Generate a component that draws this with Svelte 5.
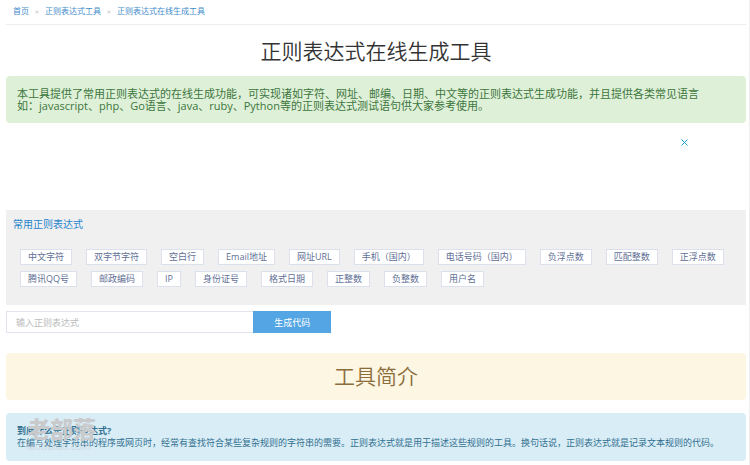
<script>
	let crumbs = ['首页', '正则表达式工具', '正则表达式在线生成工具'];

	let patrones = [
		{ name: '中文字符', value: '[\\u4e00-\\u9fa5]' },
		{ name: '双字节字符', value: '[^\\x00-\\xff]' },
		{ name: '空白行', value: '\\n\\s*\\r' },
		{ name: 'Email地址', value: '\\w+@\\w+(\\.\\w+)+' },
		{ name: '网址URL', value: 'https?://[^\\s]*' },
		{ name: '手机（国内）', value: '1\\d{10}' },
		{ name: '电话号码（国内）', value: '\\d{3,4}-\\d{7,8}' },
		{ name: '负浮点数', value: '-\\d+\\.\\d+' },
		{ name: '匹配整数', value: '-?\\d+' },
		{ name: '正浮点数', value: '\\d+\\.\\d+' },
		{ name: '腾讯QQ号', value: '[1-9]\\d{4,}' },
		{ name: '邮政编码', value: '[1-9]\\d{5}' },
		{ name: 'IP', value: '\\d+\\.\\d+\\.\\d+\\.\\d+' },
		{ name: '身份证号', value: '\\d{17}[\\dXx]' },
		{ name: '格式日期', value: '\\d{4}-\\d{2}-\\d{2}' },
		{ name: '正整数', value: '[1-9]\\d*' },
		{ name: '负整数', value: '-[1-9]\\d*' },
		{ name: '用户名', value: '[A-Za-z0-9_-]+' }
	];

	let regex = '';
	let show_ad = true;
</script>

<div class="page">
	<nav class="crumbs">
		{#each crumbs as crumb, i (crumb)}
			{#if i > 0}<span>»</span>{/if}
			<a href="#top">{crumb}</a>
		{/each}
	</nav>

	<h1>正则表达式在线生成工具</h1>

	<div class="alert success">
		本工具提供了常用正则表达式的在线生成功能，可实现诸如字符、网址、邮编、日期、中文等的正则表达式生成功能，并且提供各类常见语言<br
		/>如：javascript、php、Go语言、java、ruby、Python等的正则表达式测试语句供大家参考使用。
	</div>

	<div class="ad">
		{#if show_ad}
			<button aria-label="关闭" on:click={() => (show_ad = false)}>
				<svg width="8" height="7" viewBox="0 0 8 7">
					<path d="M0.5 0.5L6.5 6.5M6.5 0.5L0.5 6.5" stroke="#1ba3dc" stroke-width="1" />
				</svg>
			</button>
		{/if}
	</div>

	<section class="common">
		<h2>常用正则表达式</h2>
		<div class="chips">
			{#each patrones as p (p.name)}
				<button on:click={() => (regex = p.value)}>{p.name}</button>
			{/each}
		</div>
	</section>

	<form on:submit|preventDefault>
		<input type="text" aria-label="正则表达式" placeholder="输入正则表达式" bind:value={regex} />
		<button>生成代码</button>
	</form>

	<h2 class="alert warning">工具简介</h2>

	<div class="alert info">
		<strong>到底什么是正则表达式?</strong>
		<p>
			在编写处理字符串的程序或网页时，经常有查找符合某些复杂规则的字符串的需要。正则表达式就是用于描述这些规则的工具。换句话说，正则表达式就是记录文本规则的代码。
		</p>
		<div class="watermark">
			<b>老部落</b>
			<small>laobuluo.com</small>
		</div>
	</div>
</div>

<style>
	:global(body) {
		background: #fff;
	}
	.page,
	button,
	input {
		font-family: 'Open Sans', 'Noto Sans CJK SC', sans-serif;
	}
	.page {
		box-sizing: border-box;
		min-height: 100vh;
		padding: 0 3px 3px 6px;
		border-right: 1px solid #eee;
		color: #333;
	}
	h1,
	h2,
	p {
		margin: 0;
		font-weight: 400;
	}
	button {
		cursor: pointer;
	}

	.crumbs {
		display: flex;
		align-items: center;
		height: 22px;
		padding: 0 0 2px 7px;
		border-bottom: 1px solid #eee;
		font-size: 8px;
		line-height: 12px;
	}
	.crumbs a {
		color: #428bca;
		text-decoration: none;
	}
	.crumbs span {
		width: 16px;
		text-align: center;
		color: #bbb;
	}

	h1 {
		margin: 11px 0 10px;
		font-size: 21px;
		font-weight: 350;
		line-height: 30px;
		text-align: center;
	}

	.alert {
		border-radius: 4px;
		padding: 12px 11px;
	}
	.success {
		padding-bottom: 11px;
		background: #dff0d8;
		color: #3c763d;
		font-size: 11px;
		line-height: 12px;
	}

	.ad {
		display: flex;
		justify-content: flex-end;
		align-items: flex-start;
		height: 71px;
		padding: 16px 57px 0 0;
	}
	.ad button {
		display: flex;
		padding: 0;
		border: 0;
		background: none;
	}

	.common {
		padding: 6px 7px 18px;
		background: #f0f0f0;
	}
	.common h2 {
		color: #1f84cc;
		font-size: 10px;
		line-height: 16px;
	}
	.chips {
		display: flex;
		flex-wrap: wrap;
		gap: 6px 14px;
		margin-top: 17px;
		padding-left: 7px;
	}
	.chips button {
		box-sizing: border-box;
		height: 16px;
		padding: 0 7px;
		border: 1px solid #dcdfec;
		background: #fff;
		color: #5f6f95;
		font-size: 9px;
		line-height: 14px;
	}

	form {
		display: flex;
		height: 22px;
		margin: 6px 0 20px;
	}
	form input {
		box-sizing: border-box;
		width: 33.4%;
		padding: 0 9px;
		border: 1px solid #e1e4ed;
		border-right: 0;
		font-size: 9px;
	}
	form input::placeholder {
		color: #bbb;
	}
	form button {
		width: 78px;
		padding: 0;
		border: 0;
		background: #53a6e3;
		color: #fff;
		font-size: 9px;
	}

	.warning {
		margin-bottom: 13px;
		padding: 8px;
		background: #fdf6e2;
		color: #8a6d3b;
		font-size: 21px;
		font-weight: 350;
		line-height: 31px;
		text-align: center;
	}

	.info {
		position: relative;
		background: #d9edf7;
		color: #31708f;
		font-size: 9px;
		line-height: 12px;
	}
	.info strong {
		display: block;
	}
	.watermark {
		position: absolute;
		top: 4px;
		left: 21px;
		color: #c8cacc;
		pointer-events: none;
	}
	.watermark b,
	.watermark small {
		display: block;
	}
	.watermark b {
		font-size: 23px;
		font-weight: 900;
		line-height: 24px;
	}
	.watermark small {
		font-size: 10px;
		line-height: 10px;
		opacity: 0.6;
	}
</style>
